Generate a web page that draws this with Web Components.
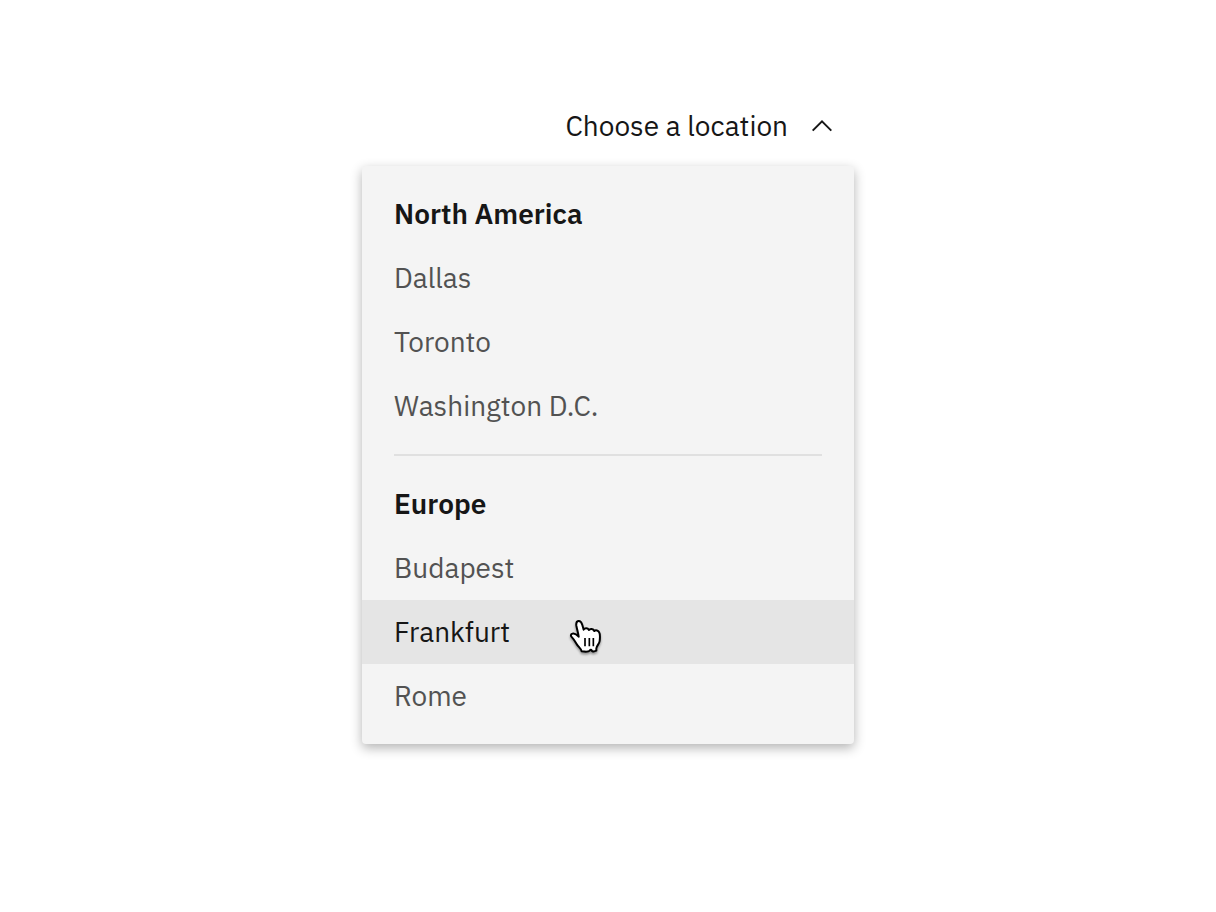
<!DOCTYPE html>
<html lang="en">
<head>
<meta charset="utf-8">
<meta name="viewport" content="width=device-width, initial-scale=1">
<title>Choose a location</title>
<style>
  body {
    margin: 0;
    background: #fff;
    font-family: "IBM Plex Sans", Roboto, "Liberation Sans", sans-serif;
    font-size: 28px;
    line-height: 36px;
    color: #161616;
  }
</style>
</head>
<body>
<location-menu label="Choose a location">
  <location-group heading="North America">
    <location-option>Dallas</location-option>
    <location-option>Toronto</location-option>
    <location-option>Washington D.C.</location-option>
  </location-group>
  <location-group heading="Europe">
    <location-option>Budapest</location-option>
    <location-option active>Frankfurt<pointer-hand slot="pointer"></pointer-hand></location-option>
    <location-option>Rome</location-option>
  </location-group>
</location-menu>

<script>
class LocationMenu extends HTMLElement {
  constructor() {
    super();
    this.attachShadow({ mode: "open" }).innerHTML = `
      <style>
        :host { display: flex; justify-content: center; padding: 94px 16px; }
        .menu { display: flex; flex-direction: column; gap: 8px; width: 100%; max-width: 492px; }
        button {
          display: flex; align-items: center; gap: 18px; align-self: flex-end;
          height: 64px; padding: 0 16px; border: 0; background: none;
          font: inherit; color: inherit; cursor: pointer;
        }
        svg { width: 32px; height: 32px; }
        .panel {
          padding: 16px 0; border-radius: 4px; background: #f4f4f4;
          box-shadow: 0 4px 12px rgba(0, 0, 0, 0.3);
        }
        .panel[hidden] { display: none; }
      </style>
      <div class="menu">
        <button type="button" aria-expanded="true" aria-controls="panel">
          <span></span>
          <svg viewBox="0 0 32 32" aria-hidden="true"><path d="M6.7 20.6 16 11.3l9.3 9.3" fill="none" stroke="#161616" stroke-width="2"/></svg>
        </button>
        <div class="panel" id="panel"><slot></slot></div>
      </div>`;
    const button = this.shadowRoot.querySelector("button");
    const panel = this.shadowRoot.querySelector(".panel");
    button.addEventListener("click", () => {
      panel.hidden = !panel.hidden;
      button.setAttribute("aria-expanded", String(!panel.hidden));
    });
  }
  connectedCallback() {
    this.shadowRoot.querySelector("span").textContent = this.getAttribute("label");
  }
}

class LocationGroup extends HTMLElement {
  constructor() {
    super();
    this.attachShadow({ mode: "open" }).innerHTML = `
      <style>
        :host { display: block; }
        :host(:not(:first-of-type))::before {
          content: ""; display: block; height: 2px; margin: 16px 32px; background: #e0e0e0;
        }
        h2 { margin: 0; padding: 14px 32px; font: inherit; font-weight: 600; }
      </style>
      <section aria-labelledby="heading"><h2 id="heading"></h2><slot></slot></section>`;
  }
  connectedCallback() {
    this.shadowRoot.querySelector("h2").textContent = this.getAttribute("heading");
  }
}

class LocationOption extends HTMLElement {
  constructor() {
    super();
    this.attachShadow({ mode: "open" }).innerHTML = `
      <style>
        :host { display: block; position: relative; color: #525252; }
        :host([active]), :host(:hover) { color: #161616; background: #e5e5e5; }
        button {
          display: block; width: 100%; padding: 14px 32px; border: 0; background: none;
          font: inherit; color: inherit; text-align: left; cursor: pointer;
        }
      </style>
      <button type="button"><slot></slot></button><slot name="pointer"></slot>`;
  }
}

class PointerHand extends HTMLElement {
  constructor() {
    super();
    this.attachShadow({ mode: "open" }).innerHTML = `
      <style>
        :host { position: absolute; left: 198px; top: 10px; pointer-events: none; }
        svg { display: block; width: 50px; height: 50px; overflow: visible; filter: drop-shadow(0 2px 1px rgba(0, 0, 0, 0.35)); }
      </style>
      <svg viewBox="0 0 150 150" aria-hidden="true">
        <path d="M65 124c-1-7-9-13-14-20-4-7-8-15-15-22-5-5-4-10 1-11 6-2 13 2 19 9-1-9-5-22-7-33-1-8 1-13 6-14 6-1 10 5 12 12l4 14c3-6 12-6 16 1 3-5 13-4 16 3 4-4 12-2 15 5 3 6 2 16 1 25-1 9-9 14-10 22v7c-4 2-9 3-13 1-2-4-4-5-7-1-4 5-11 4-24 2z" fill="#fff" stroke="#000" stroke-width="6" stroke-linejoin="round"/>
        <path d="M75 84v25M88 84v25M100 84v25" fill="none" stroke="#000" stroke-width="5"/>
      </svg>`;
  }
}

customElements.define("location-menu", LocationMenu);
customElements.define("location-group", LocationGroup);
customElements.define("location-option", LocationOption);
customElements.define("pointer-hand", PointerHand);
</script>
</body>
</html>
